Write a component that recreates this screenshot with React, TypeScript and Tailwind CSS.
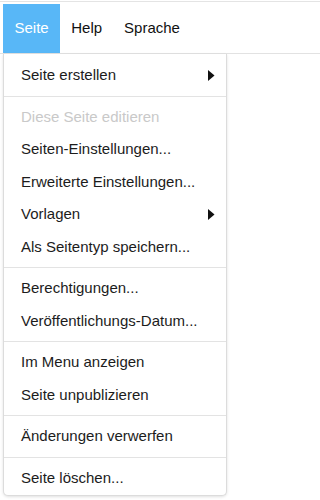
import { ReactNode } from 'react';

type Entry =
  | { kind: 'item'; label: string; disabled?: boolean; submenu?: boolean }
  | { kind: 'divider' };

const entries: Entry[] = [
  { kind: 'item', label: 'Seite erstellen', submenu: true },
  { kind: 'divider' },
  { kind: 'item', label: 'Diese Seite editieren', disabled: true },
  { kind: 'item', label: 'Seiten-Einstellungen...' },
  { kind: 'item', label: 'Erweiterte Einstellungen...' },
  { kind: 'item', label: 'Vorlagen', submenu: true },
  { kind: 'item', label: 'Als Seitentyp speichern...' },
  { kind: 'divider' },
  { kind: 'item', label: 'Berechtigungen...' },
  { kind: 'item', label: 'Veröffentlichungs-Datum...' },
  { kind: 'divider' },
  { kind: 'item', label: 'Im Menu anzeigen' },
  { kind: 'item', label: 'Seite unpublizieren' },
  { kind: 'divider' },
  { kind: 'item', label: 'Änderungen verwerfen' },
  { kind: 'divider' },
  { kind: 'item', label: 'Seite löschen...' },
];

function Caret() {
  return (
    <svg width="7" height="11" viewBox="0 0 7 11" className="shrink-0">
      <path d="M0 0 L6.5 5.5 L0 11 Z" fill="#111" />
    </svg>
  );
}

function MenuItem({ children, disabled, submenu }: { children: ReactNode; disabled?: boolean; submenu?: boolean }) {
  return (
    <div
      className={`flex h-[32.5px] items-center justify-between pl-[17px] pr-[11px] ${
        disabled ? 'text-[#c9c9c9]' : 'text-[#1c1c1c] hover:bg-[#f2f2f2]'
      }`}
    >
      <span>{children}</span>
      {submenu && <Caret />}
    </div>
  );
}

export default function App() {
  return (
    <div className="relative w-full h-[500px] overflow-hidden bg-white text-[15px] font-['Liberation_Sans',Arial,sans-serif]">
      <div className="h-px mt-px bg-[#e4e4e4]" />

      {/* Menu bar */}
      <div className="flex items-end h-[52px] pl-[3px] border-b border-[#e2e2e2]">
        <div className="flex h-[49px] items-center px-[11.5px] bg-[#58b7f7] text-white">Seite</div>
        <div className="flex h-[49px] items-center px-[11px] text-[#111]">Help</div>
        <div className="flex h-[49px] items-center px-[11px] text-[#111]">Sprache</div>
      </div>

      {/* Dropdown */}
      <div className="absolute left-[3px] top-[54px] w-[224px] rounded-b-[5px] border-x border-b border-[#dcdcdc] bg-white pt-[5px] pb-[1px] shadow-[0_1px_3px_rgba(0,0,0,0.12)]">
        {entries.map((e, i) =>
          e.kind === 'divider' ? (
            <div key={i} className="my-[4px] h-px bg-[#e3e3e3]" />
          ) : (
            <MenuItem key={i} disabled={e.disabled} submenu={e.submenu}>
              {e.label}
            </MenuItem>
          )
        )}
      </div>
    </div>
  );
}
